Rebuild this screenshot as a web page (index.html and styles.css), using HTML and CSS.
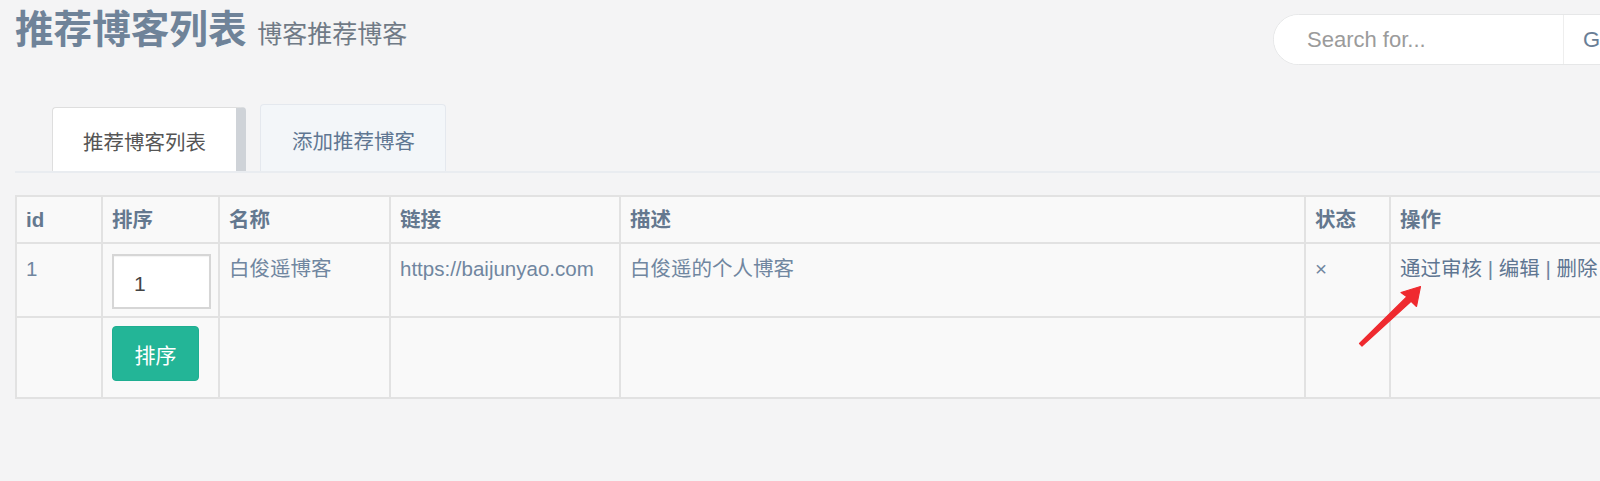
FILE: index.html
```html
<!DOCTYPE html>
<html lang="zh-CN">
<head>
<meta charset="utf-8">
<title>推荐博客列表</title>
<link rel="stylesheet" href="styles.css">
</head>
<body>
<div class="page">
  <header class="topbar">
    <h1 class="title">推荐博客列表 <small class="subtitle">博客推荐博客</small></h1>
    <form class="search">
      <input class="search-input" type="text" placeholder="Search for...">
      <button class="search-btn" type="button">Go!</button>
    </form>
  </header>

  <ul class="tabs">
    <li class="tab tab-active">推荐博客列表</li>
    <li class="tab">添加推荐博客</li>
  </ul>

  <table class="grid">
    <colgroup>
      <col class="c-id"><col class="c-sort"><col class="c-name"><col class="c-link"><col class="c-desc"><col class="c-state"><col class="c-op">
    </colgroup>
    <thead>
      <tr><th>id</th><th>排序</th><th>名称</th><th>链接</th><th>描述</th><th>状态</th><th>操作</th></tr>
    </thead>
    <tbody>
      <tr class="row-data">
        <td>1</td>
        <td><input class="sort-input" type="text" value="1"></td>
        <td>白俊遥博客</td>
        <td>https://baijunyao.com</td>
        <td>白俊遥的个人博客</td>
        <td>×</td>
        <td><a class="op">通过审核</a> | <a class="op">编辑</a> | <a class="op">删除</a></td>
      </tr>
      <tr class="row-foot">
        <td></td>
        <td><button class="btn-sort" type="button">排序</button></td>
        <td></td><td></td><td></td><td></td><td></td>
      </tr>
    </tbody>
  </table>
</div>

<svg class="arrow" width="75" height="72" viewBox="0 0 75 72" aria-hidden="true">
  <polygon points="4.5,63.5 51.9,16.8 46,12.5 65.5,6.5 61.5,26.5 56.1,21.2 7,66" fill="#ef2a2f" stroke="#ef2a2f" stroke-width="1.2" stroke-linejoin="round"/>
</svg>
</body>
</html>
```

FILE: styles.css
```css
html, body {
  margin: 0;
  padding: 0;
}

body {
  background: #f4f4f5;
  font-family: "Liberation Sans", "Noto Sans CJK SC", sans-serif;
  font-size: 20.5px;
  color: #6a7e96;
  width: 1600px;
  height: 481px;
  overflow: hidden;
  position: relative;
}

.page {
  width: 1658px;
  padding-left: 15px;
}

.topbar {
  display: flex;
  align-items: flex-start;
  padding-top: 7px;
}

.title {
  margin: 0;
  font-size: 38.6px;
  line-height: 46px;
  font-weight: 700;
  color: #6f8399;
}

.subtitle {
  font-size: 25px;
  font-weight: 400;
  color: #707a86;
}

.search {
  margin: 7px 0 0 auto;
  display: flex;
  width: 400px;
  height: 51px;
  box-sizing: border-box;
  border: 1px solid #e6e7e8;
  border-radius: 26px 0 0 26px;
  background: #fff;
  overflow: hidden;
}

.search-input {
  width: 290px;
  box-sizing: border-box;
  border: none;
  border-right: 1px solid #eeeeee;
  padding: 0 0 0 33px;
  font-family: inherit;
  font-size: 22px;
  color: #555;
  background: #fff;
  outline: none;
}

.search-input::placeholder {
  color: #9b9b9b;
}

.search-btn {
  border: none;
  background: #fff;
  padding: 0 0 0 19px;
  font-family: inherit;
  font-size: 22px;
  color: #6a7e96;
  text-align: left;
  flex: 1;
}

.tabs {
  list-style: none;
  margin: 39px 0 0 0;
  padding: 0 0 0 37px;
  display: flex;
  align-items: flex-end;
  gap: 14px;
  border-bottom: 2px solid #e9ecf0;
}

.tab {
  height: 67px;
  box-sizing: border-box;
  padding: 0 30px 0 31px;
  display: flex;
  align-items: center;
  padding-top: 4px;
  background: #f3f6f9;
  border: 1px solid #e4e8ee;
  border-bottom: none;
  border-radius: 4px 4px 0 0;
  color: #5f7692;
  font-size: 20.5px;
}

.tab-active {
  height: 64px;
  background: #fff;
  border: 1px solid #dedede;
  border-right: 10px solid #cfd3d8;
  border-bottom: none;
  padding: 2px 30px 0 30px;
  color: #555;
}

.grid {
  margin-top: 22px;
  width: 100%;
  table-layout: fixed;
  border-collapse: collapse;
  background: #f9f9f9;
  border: 2px solid #e2e2e2;
}

.c-id { width: 86px; }
.c-sort { width: 117px; }
.c-name { width: 171px; }
.c-link { width: 230px; }
.c-desc { width: 685px; }
.c-state { width: 85px; }
.c-op { width: 284px; }

.grid th,
.grid td {
  border: 2px solid #e2e2e2;
  text-align: left;
  vertical-align: top;
  white-space: nowrap;
  overflow: hidden;
}

.grid th {
  padding: 9px 9px 8px;
  line-height: 28px;
  font-weight: 700;
  color: #64788f;
}

.grid td {
  padding: 10px 9px 7px;
  line-height: 30px;
  color: #7086a0;
}

.row-foot td {
  height: 71px;
  padding: 8px 9px 0;
}

.sort-input {
  display: block;
  width: 99px;
  height: 55px;
  box-sizing: border-box;
  border: 2px solid #d6d6d6;
  padding: 4px 0 0 20px;
  font-family: inherit;
  font-size: 21px;
  color: #444;
  background: #fff;
  box-shadow: inset 0 1px 1px rgba(0, 0, 0, 0.05);
}

.btn-sort {
  display: block;
  width: 87px;
  height: 55px;
  border: 1px solid #1fae91;
  border-radius: 4px;
  background: #23b597;
  color: #fff;
  font-family: inherit;
  font-size: 21px;
  padding: 0;
}

.op {
  color: #5f7692;
  text-decoration: none;
}

.arrow {
  position: absolute;
  left: 1355px;
  top: 280px;
}
```
